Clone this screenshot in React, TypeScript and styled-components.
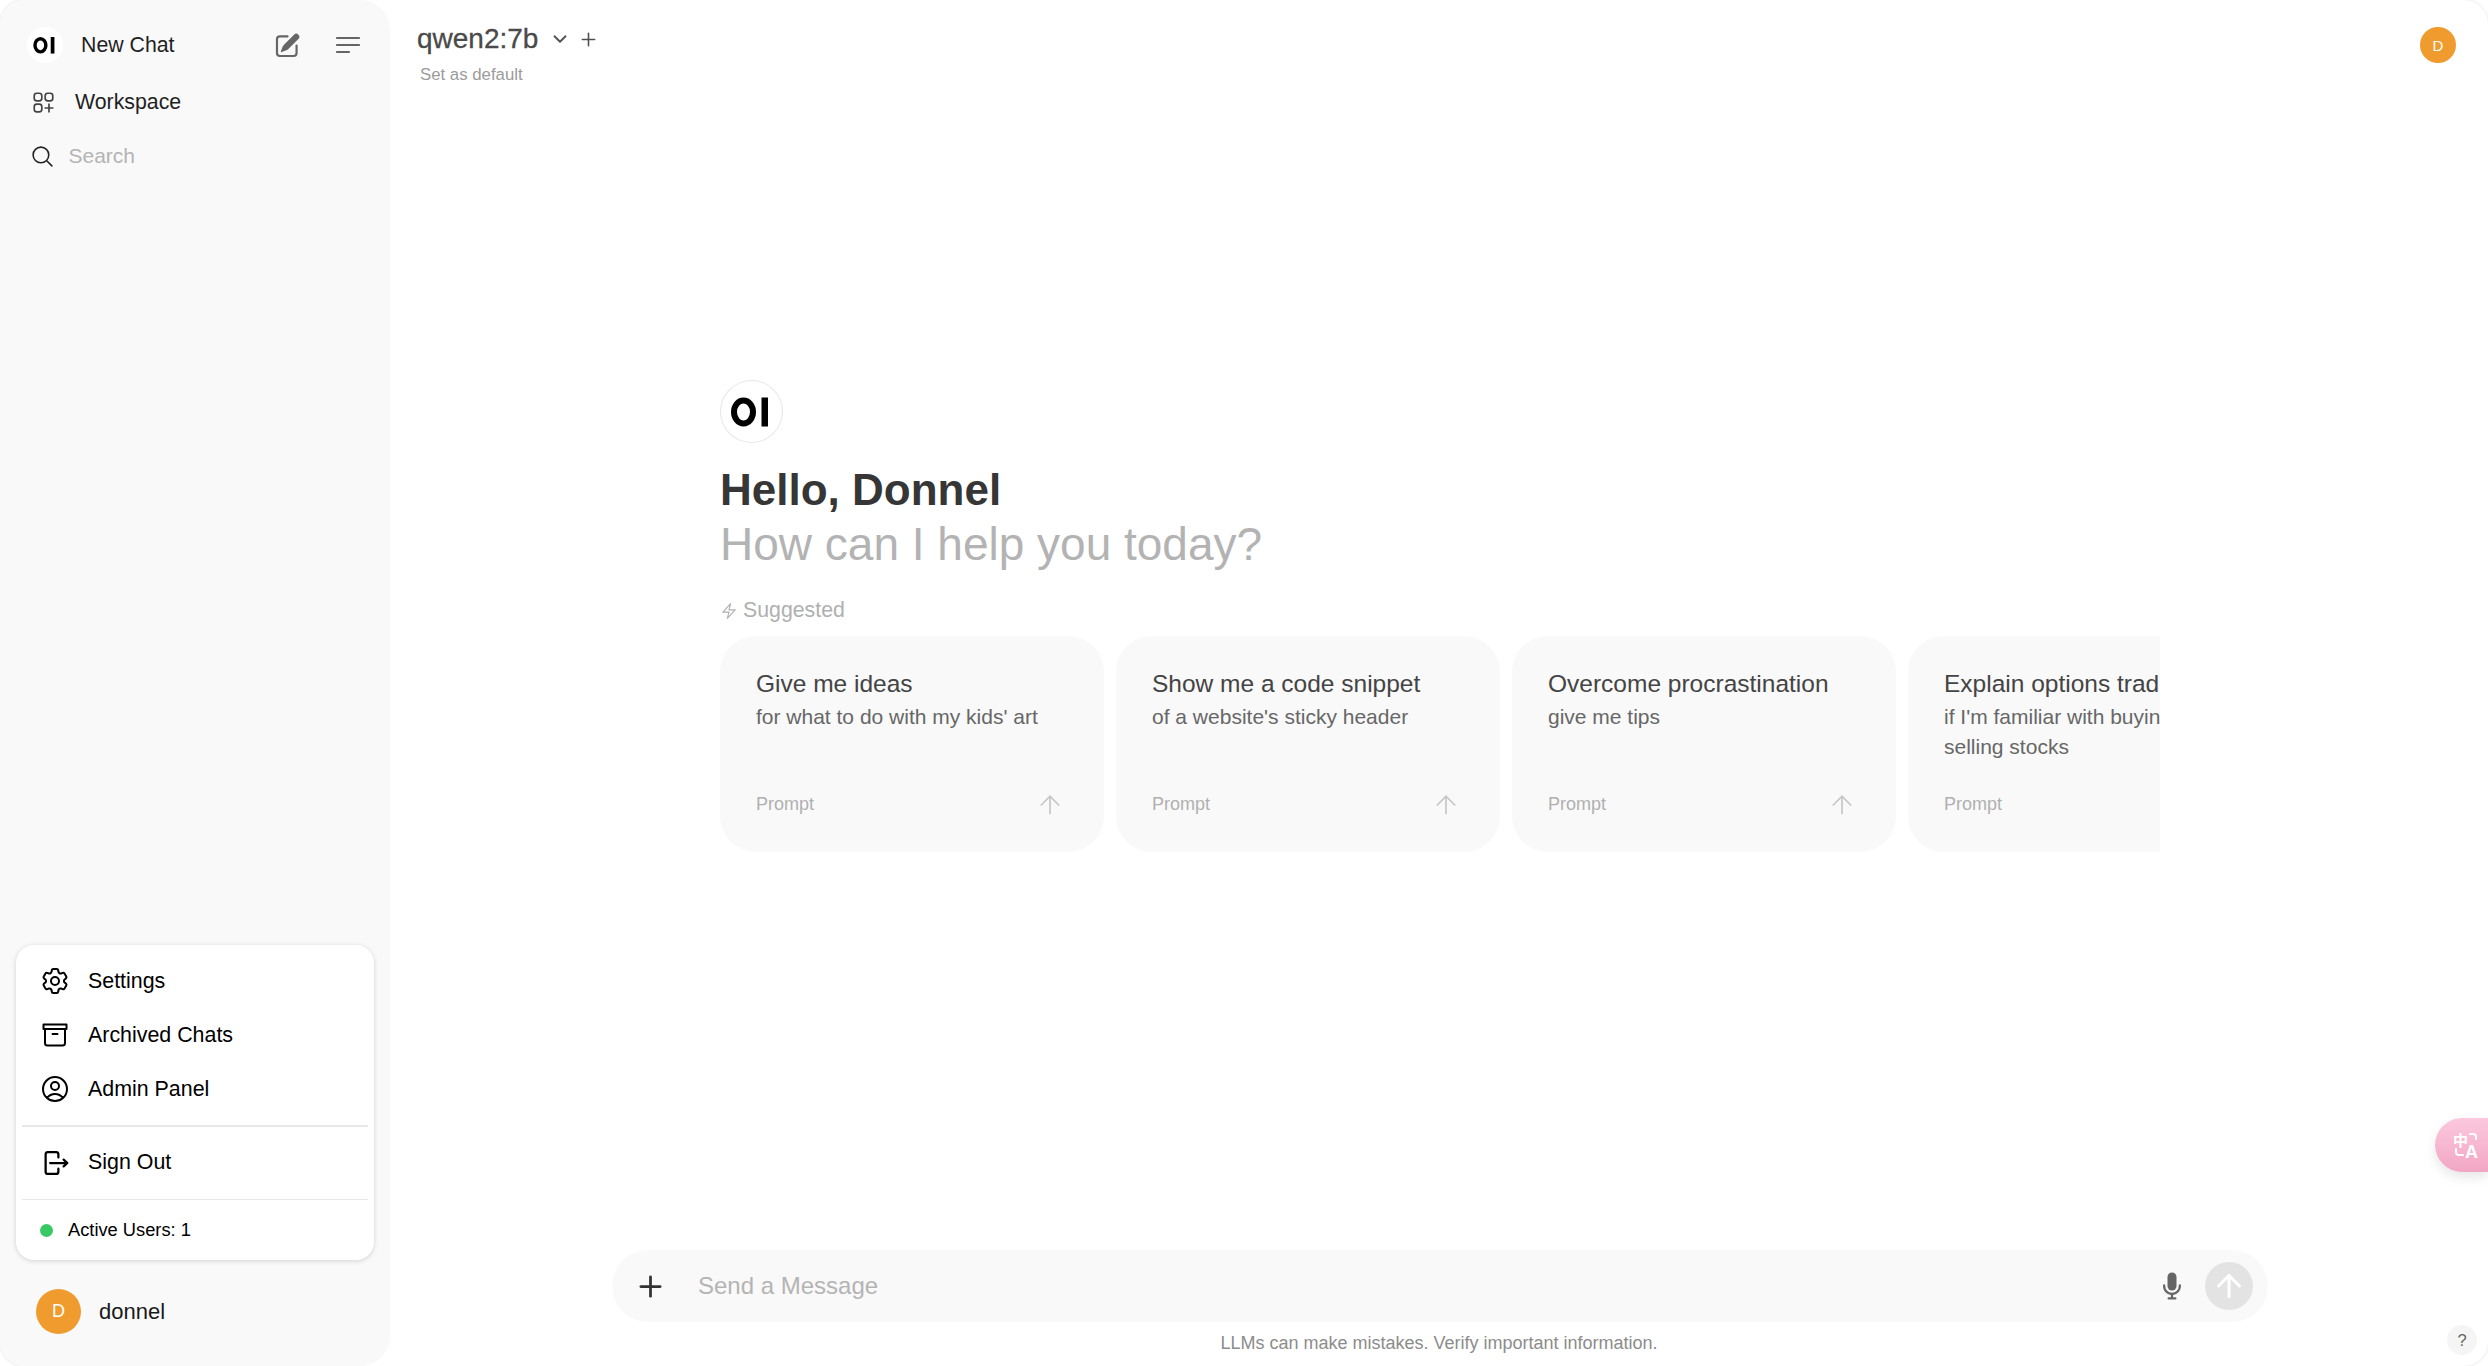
import React from "react";
import styled, { createGlobalStyle } from "styled-components";
import { ArrowUp, ChevronDown, Plus } from "lucide-react";
import {
  HiMiniMicrophone,
  HiMiniPencilSquare,
  HiOutlineBolt,
  HiOutlineCog6Tooth,
  HiOutlineMagnifyingGlass,
  HiOutlineSquaresPlus,
  HiOutlineUserCircle,
} from "react-icons/hi2";

const Global = createGlobalStyle`
  html, body { margin: 0; padding: 0; height: 100%; background: #fff; }
  * { box-sizing: border-box; }
  body { font-family: "Liberation Sans", Arial, sans-serif; overflow: hidden; }
`;

const Frame = styled.div`
  position: relative;
  width: 2488px;
  height: 1366px;
  display: flex;
  border-radius: 24px;
  overflow: hidden;
  background: #fff;
  box-shadow: 0 0 3px rgba(0, 0, 0, 0.14);
`;

const Sidebar = styled.aside`
  width: 390px;
  flex: none;
  display: flex;
  flex-direction: column;
  background: #f9f9f9;
  border-radius: 0 30px 30px 0;
  padding-top: 18px;
`;

const Row = styled.div`
  display: flex;
  align-items: center;
  height: 54px;
  padding-left: 27px;
  color: #1f1f1f;
  font-size: 21.3px;
`;

const NewChatRow = styled(Row)`
  gap: 18px;
  padding-right: 30px;
`;

const WorkspaceRow = styled(Row)`
  gap: 18.5px;
  margin-top: 3px;
  padding-left: 29.5px;
`;

const SearchRow = styled(Row)`
  gap: 14px;
  padding-left: 29.5px;
  color: #b4b4b4;
  font-size: 21px;
`;

const RowLabel = styled.span`
  flex: 1;
`;

const HeaderIcons = styled.div`
  display: flex;
  align-items: center;
  gap: 34.5px;
  color: #666;
`;

const LogoBadge = styled.div<{ $size: number; $ring?: boolean }>`
  width: ${(p) => p.$size}px;
  height: ${(p) => p.$size}px;
  flex: none;
  border-radius: 50%;
  background: #fff;
  box-shadow: ${(p) => (p.$ring ? "inset 0 0 0 1px #e6e6e6" : "none")};
  display: flex;
`;

const Spacer = styled.div`
  flex: 1;
`;

const Menu = styled.div`
  margin: 0 16px;
  width: 358px;
  background: #fff;
  border-radius: 18px;
  padding: 9px 6px 0;
  box-shadow: 0 1px 5px rgba(0, 0, 0, 0.16);
`;

const MenuItem = styled.div`
  display: flex;
  align-items: center;
  gap: 21px;
  height: 54px;
  padding-left: 21px;
  font-size: 21.4px;
  color: #000;
`;

const MenuGlyph = styled.span`
  width: 24px;
  height: 24px;
  flex: none;
  display: flex;
  align-items: center;
  justify-content: center;

  svg {
    flex: none;
  }
`;

const Divider = styled.hr`
  border: 0;
  height: 1.5px;
  background: #e8e8e8;
  margin: 9px 0;
`;

const ActiveRow = styled.div`
  display: flex;
  align-items: center;
  gap: 15px;
  height: 60px;
  margin-top: -9px;
  padding-left: 18px;
  font-size: 18.3px;
  color: #000;
`;

const GreenDot = styled.span`
  width: 13px;
  height: 13px;
  border-radius: 50%;
  background: #38c866;
`;

const UserRow = styled.div`
  display: flex;
  align-items: center;
  gap: 18px;
  margin: 29px 0 32px;
  padding-left: 36px;
  font-size: 22px;
  color: #1a1a1a;
`;

const Avatar = styled.div<{ $size: number; $font: number }>`
  width: ${(p) => p.$size}px;
  height: ${(p) => p.$size}px;
  flex: none;
  border-radius: 50%;
  background: #ef9b2d;
  color: #fff;
  font-size: ${(p) => p.$font}px;
  display: flex;
  align-items: center;
  justify-content: center;
`;

const Main = styled.main`
  position: relative;
  flex: 1;
  min-width: 0;
  display: flex;
  flex-direction: column;
`;

const TopBar = styled.header`
  display: flex;
  justify-content: space-between;
  align-items: flex-start;
  height: 90px;
  padding: 21px 32px 0 27px;
`;

const ModelRow = styled.div`
  display: flex;
  align-items: center;
  height: 36px;
  color: #4a4a4a;
  font-size: 28px;
  -webkit-text-stroke: 0.3px #4a4a4a;
`;

const ModelIcons = styled.div`
  display: flex;
  align-items: center;
  gap: 7px;
  margin-left: 11px;
  color: #4f4f4f;
`;

const SetDefault = styled.div`
  margin: 6px 0 0 3px;
  line-height: 24px;
  font-size: 16.8px;
  color: #9b9b9b;
`;

const TopAvatar = styled(Avatar)`
  margin-top: 6px;
`;

const Hero = styled.section`
  width: 1440px;
  margin: 290px 0 0 330px;
  overflow: hidden;
`;

const HeroLogo = styled(LogoBadge)`
  margin-bottom: 20px;
`;

const Hello = styled.h1`
  margin: 0;
  font-size: 44px;
  line-height: 54px;
  font-weight: 700;
  color: #363636;
`;

const Subtitle = styled.h2`
  margin: 0;
  font-size: 46px;
  line-height: 54px;
  font-weight: 400;
  color: #b3b3b3;
`;

const SuggestedLabel = styled.div`
  display: flex;
  align-items: center;
  gap: 5px;
  height: 27px;
  margin-top: 26px;
  font-size: 21.3px;
  color: #b0b0b0;
`;

const CardRail = styled.div`
  display: flex;
  gap: 12px;
  margin-top: 12px;
`;

const Card = styled.div`
  width: 384px;
  height: 216px;
  flex: none;
  display: flex;
  flex-direction: column;
  padding: 30px 36px 34px;
  background: #f9f9f9;
  border-radius: 36px;
`;

const CardTitle = styled.div`
  font-size: 24.5px;
  line-height: 36px;
  color: #444;
  white-space: nowrap;
`;

const CardSub = styled.div`
  font-size: 21px;
  line-height: 30px;
  color: #676767;
`;

const CardFoot = styled.div`
  display: flex;
  align-items: center;
  justify-content: space-between;
  height: 27px;
  margin-top: auto;
  font-size: 18px;
  color: #b0b0b0;
`;

const CardArrow = styled.span`
  display: flex;
  margin-right: 3px;
  color: #c4c4c4;
`;

const Composer = styled.div`
  display: flex;
  align-items: center;
  width: 1656px;
  height: 72px;
  margin: auto 0 0 222px;
  padding: 0 15px 0 22px;
  border-radius: 36px;
  background: #f9f9f9;
`;

const ComposerPlus = styled.span`
  display: flex;
  color: #333;
`;

const Placeholder = styled.span`
  flex: 1;
  margin-left: 31px;
  font-size: 24px;
  color: #b4b4b4;
`;

const MicIcon = styled.span`
  display: flex;
  color: #666;
  margin-right: 18px;
`;

const SendButton = styled.span`
  width: 48px;
  height: 48px;
  display: flex;
  align-items: center;
  justify-content: center;
  border-radius: 50%;
  background: #e3e3e3;
  color: #fff;
`;

const Disclaimer = styled.div`
  margin: 8px 0 9px;
  height: 27px;
  line-height: 27px;
  text-align: center;
  font-size: 18px;
  color: #8c8c8c;
`;

const HelpButton = styled.div`
  position: absolute;
  right: 11px;
  bottom: 11px;
  width: 30px;
  height: 30px;
  display: flex;
  align-items: center;
  justify-content: center;
  border-radius: 50%;
  background: #f5f5f5;
  color: #666;
  font-size: 16.5px;
`;

const TranslateTab = styled.div`
  position: absolute;
  right: 0;
  top: 1118px;
  width: 53px;
  height: 54px;
  padding: 14px 0 0 18px;
  border-radius: 27px 0 0 27px;
  background: linear-gradient(180deg, #fcc8de 0%, #f2a6c3 100%);
  box-shadow: 0 5px 12px rgba(0, 0, 0, 0.1);
`;

const OILogo = ({ size }: { size: number }) => (
  <svg width={size} height={size} viewBox="0 0 63 63">
    <ellipse cx="23.5" cy="32" rx="9.5" ry="11.5" fill="none" stroke="#000" strokeWidth="6" />
    <rect x="41.5" y="17.5" width="6.5" height="29" fill="#000" />
  </svg>
);

const LinesIcon = () => (
  <svg width="24" height="24" viewBox="0 0 24 24" fill="none" stroke="currentColor" strokeWidth="2.2" strokeLinecap="round">
    <path d="M1 5h22M1 12h22M1 19h12" />
  </svg>
);

const ArchiveIcon = () => (
  <svg width="26" height="24" viewBox="0 0 26 24" fill="none" stroke="currentColor" strokeWidth="2" strokeLinecap="round" strokeLinejoin="round">
    <path d="M1.5 1.5h23v4.5h-23zM3 6V20a2.5 2.5 0 0 0 2.5 2.5h15a2.5 2.5 0 0 0 2.5-2.5V6M10.5 11h5" />
  </svg>
);

const SignOutIcon = () => (
  <svg width="30" height="30" viewBox="0 0 20 20" fill="currentColor">
    <path fillRule="evenodd" clipRule="evenodd" d="M3 4.25A2.25 2.25 0 015.25 2h5.5A2.25 2.25 0 0113 4.25v2a.75.75 0 01-1.5 0v-2a.75.75 0 00-.75-.75h-5.5a.75.75 0 00-.75.75v11.5c0 .414.336.75.75.75h5.5a.75.75 0 00.75-.75v-2a.75.75 0 011.5 0v2A2.25 2.25 0 0110.75 18h-5.5A2.25 2.25 0 013 15.75V4.25z" />
    <path fillRule="evenodd" clipRule="evenodd" d="M6 10a.75.75 0 01.75-.75h9.546l-1.048-.943a.75.75 0 111.004-1.114l2.5 2.25a.75.75 0 010 1.114l-2.5 2.25a.75.75 0 11-1.004-1.114l1.048-.943H6.75A.75.75 0 016 10z" />
  </svg>
);

const TranslateIcon = () => (
  <svg width="28" height="27" viewBox="0 0 28 27" fill="none">
    <text x="0" y="14" fontFamily="'Noto Sans CJK SC', sans-serif" fontWeight="700" fontSize="15" fill="#fff">中</text>
    <text x="12" y="25.5" fontFamily="'Liberation Sans', sans-serif" fontWeight="700" fontSize="18" fill="#fff">A</text>
    <path d="M17 2h3a3 3 0 0 1 3 3v2M3 17v3a3 3 0 0 0 3 3h4" stroke="#fff" strokeWidth="2" strokeLinecap="round" />
  </svg>
);

const cards = [
  { title: "Give me ideas", sub: "for what to do with my kids' art" },
  { title: "Show me a code snippet", sub: "of a website's sticky header" },
  { title: "Overcome procrastination", sub: "give me tips" },
  { title: "Explain options trading", sub: "if I'm familiar with buying and selling stocks" },
];

export default function App() {
  return (
    <>
      <Global />
      <Frame>
        <Sidebar>
          <NewChatRow>
            <LogoBadge $size={36}>
              <OILogo size={36} />
            </LogoBadge>
            <RowLabel>New Chat</RowLabel>
            <HeaderIcons>
              <HiMiniPencilSquare size={29} />
              <LinesIcon />
            </HeaderIcons>
          </NewChatRow>
          <WorkspaceRow>
            <HiOutlineSquaresPlus size={27} color="#444" />
            <RowLabel>Workspace</RowLabel>
          </WorkspaceRow>
          <SearchRow>
            <HiOutlineMagnifyingGlass size={25} color="#222" />
            <RowLabel>Search</RowLabel>
          </SearchRow>
          <Spacer />
          <Menu>
            <MenuItem>
              <MenuGlyph>
                <HiOutlineCog6Tooth size={32} />
              </MenuGlyph>
              Settings
            </MenuItem>
            <MenuItem>
              <MenuGlyph>
                <ArchiveIcon />
              </MenuGlyph>
              Archived Chats
            </MenuItem>
            <MenuItem>
              <MenuGlyph>
                <HiOutlineUserCircle size={32} />
              </MenuGlyph>
              Admin Panel
            </MenuItem>
            <Divider />
            <MenuItem>
              <MenuGlyph>
                <SignOutIcon />
              </MenuGlyph>
              Sign Out
            </MenuItem>
            <Divider />
            <ActiveRow>
              <GreenDot />
              Active Users: 1
            </ActiveRow>
          </Menu>
          <UserRow>
            <Avatar $size={45} $font={18}>D</Avatar>
            donnel
          </UserRow>
        </Sidebar>
        <Main>
          <TopBar>
            <div>
              <ModelRow>
                qwen2:7b
                <ModelIcons>
                  <ChevronDown size={22} strokeWidth={2} />
                  <Plus size={21} strokeWidth={1.8} />
                </ModelIcons>
              </ModelRow>
              <SetDefault>Set as default</SetDefault>
            </div>
            <TopAvatar $size={36} $font={15}>D</TopAvatar>
          </TopBar>
          <Hero>
            <HeroLogo $size={63} $ring>
              <OILogo size={63} />
            </HeroLogo>
            <Hello>Hello, Donnel</Hello>
            <Subtitle>How can I help you today?</Subtitle>
            <SuggestedLabel>
              <HiOutlineBolt size={18} />
              Suggested
            </SuggestedLabel>
            <CardRail>
              {cards.map((c) => (
                <Card key={c.title}>
                  <CardTitle>{c.title}</CardTitle>
                  <CardSub>{c.sub}</CardSub>
                  <CardFoot>
                    Prompt
                    <CardArrow>
                      <ArrowUp size={30} strokeWidth={1.3} />
                    </CardArrow>
                  </CardFoot>
                </Card>
              ))}
            </CardRail>
          </Hero>
          <Composer>
            <ComposerPlus>
              <Plus size={33} strokeWidth={2} />
            </ComposerPlus>
            <Placeholder>Send a Message</Placeholder>
            <MicIcon>
              <HiMiniMicrophone size={30} />
            </MicIcon>
            <SendButton>
              <ArrowUp size={36} strokeWidth={2} />
            </SendButton>
          </Composer>
          <Disclaimer>LLMs can make mistakes. Verify important information.</Disclaimer>
          <HelpButton>?</HelpButton>
          <TranslateTab>
            <TranslateIcon />
          </TranslateTab>
        </Main>
      </Frame>
    </>
  );
}
